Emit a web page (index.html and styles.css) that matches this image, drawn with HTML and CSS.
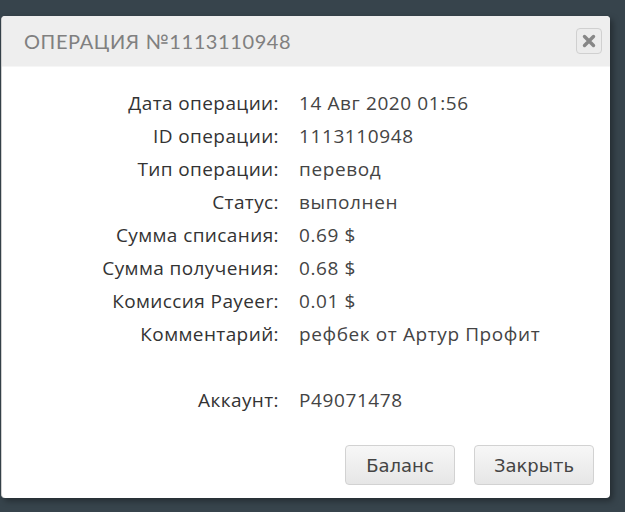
FILE: index.html
```html
<!DOCTYPE html>
<html lang="ru">
<head>
    <meta charset="UTF-8">
    <title>Операция</title>
    <link rel="stylesheet" href="styles.css">
</head>
<body>
    <div class="modal">
        <div class="modal-header">
            <h3>Операция №1113110948</h3>
            <button class="close" type="button">
                <svg width="14" height="14" viewBox="0 0 14 14"><path d="M2.5 2.5 L11.5 11.5 M11.5 2.5 L2.5 11.5" stroke="#878787" stroke-width="3.4" stroke-linecap="round"/></svg>
            </button>
        </div>

        <div class="modal-body">
            <div class="info">
                <span class="label">Дата операции:</span><span class="value">14 Авг 2020 01:56</span>
                <span class="label">ID операции:</span><span class="value">1113110948</span>
                <span class="label">Тип операции:</span><span class="value">перевод</span>
                <span class="label">Статус:</span><span class="value">выполнен</span>
                <span class="label">Сумма списания:</span><span class="value">0.69 $</span>
                <span class="label">Сумма получения:</span><span class="value">0.68 $</span>
                <span class="label">Комиссия Payeer:</span><span class="value">0.01 $</span>
                <span class="label">Комментарий:</span><span class="value">рефбек от Артур Профит</span>
                <span class="spacer"></span>
                <span class="label">Аккаунт:</span><span class="value">P49071478</span>
            </div>
        </div>

        <div class="modal-footer">
            <button class="btn" type="button">Баланс</button>
            <button class="btn btn-wide" type="button">Закрыть</button>
        </div>
    </div>
</body>
</html>
```

FILE: styles.css
```css
body {
    margin: 0;
    height: 512px;
    background-color: #37444c;
    font-family: "Open Sans", sans-serif;
    overflow: hidden;
}
.modal {
    margin: 16px 0 0 1px;
    width: 608px;
    height: 482px;
    background-color: #ffffff;
    border-left: 1px solid #cfcfcf;
    border-radius: 4px;
    box-shadow: 3px 3px 6px rgba(0, 0, 0, 0.35);
    display: flex;
    flex-direction: column;
    overflow: hidden;
}
.modal-header {
    height: 50px;
    display: flex;
    align-items: center;
    justify-content: space-between;
    padding: 0 8px 0 22px;
    background-color: #eeeeee;
    border-bottom: 1px solid #f6f6f6;
}
.modal-header h3 {
    margin: 0;
    font-family: "Lato", sans-serif;
    font-weight: normal;
    font-size: 20px;
    letter-spacing: 0.6px;
    text-transform: uppercase;
    color: #808080;
}
.close {
    width: 26px;
    height: 26px;
    padding: 0;
    display: flex;
    align-items: center;
    justify-content: center;
    background-color: #ececec;
    border: 1px solid #d0d0d0;
    border-radius: 4px;
}
.modal-body {
    flex: 1;
    padding-top: 19px;
}
.info {
    display: grid;
    grid-template-columns: 277px 1fr;
    grid-auto-rows: 33px;
    column-gap: 20px;
    align-items: center;
    font-size: 19px;
    letter-spacing: 0.4px;
}
.label {
    text-align: right;
    color: #333333;
}
.value {
    color: #444444;
    letter-spacing: 0.6px;
}
.spacer {
    grid-column: 1 / 3;
    height: 34px;
}
.modal-footer {
    display: flex;
    justify-content: flex-end;
    gap: 19px;
    padding: 0 16px 13px 0;
}
.btn {
    width: 110px;
    height: 40px;
    font-family: "DejaVu Sans", sans-serif;
    font-size: 18px;
    color: #444444;
    background: linear-gradient(#f7f7f7, #e6e6e6);
    border: 1px solid #d2d2d2;
    border-radius: 4px;
}
.btn-wide {
    width: 120px;
}
```
